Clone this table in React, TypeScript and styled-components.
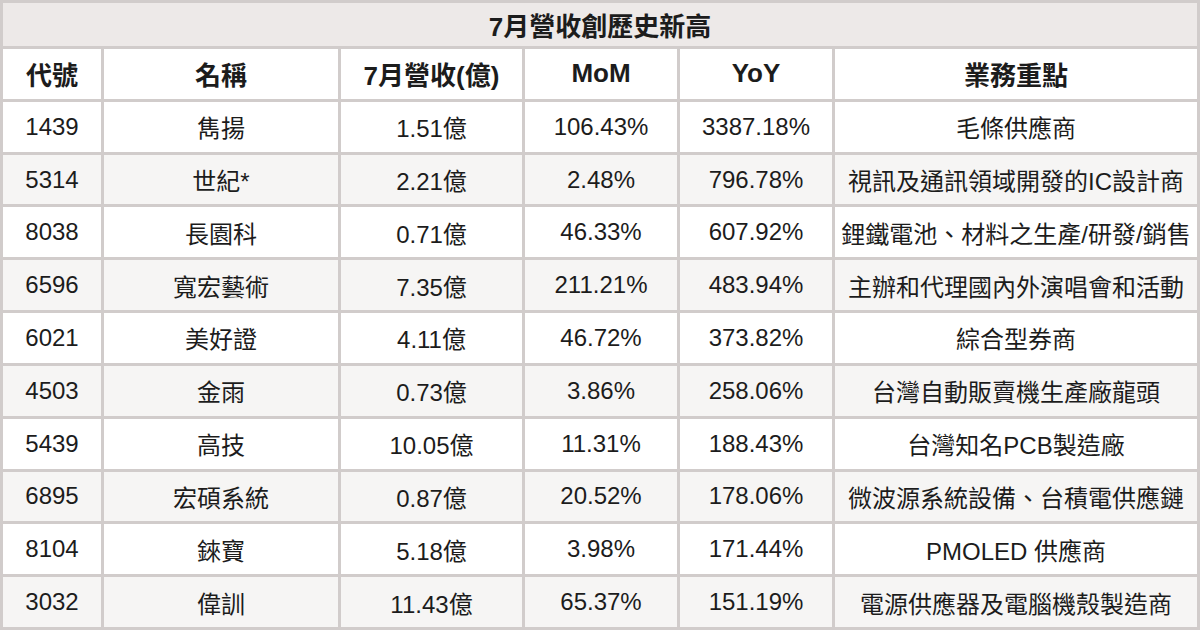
import styled, {createGlobalStyle} from "styled-components";

const GlobalStyle = createGlobalStyle`
    html, body {
        margin: 0;
        padding: 0;
        background: #ffffff;
    }
    body {
        font-family: "Liberation Sans", "Noto Sans CJK TC", sans-serif;
        color: #1c1c1c;
    }
`;

const Sheet = styled.div`
    box-sizing: border-box;
    width: 1200px;
    height: 630px;
    display: grid;
    grid-template-columns: 98px 234px 181px 152px 152px 1fr;
    grid-template-rows: 43px repeat(11, 1fr);
    gap: 3px;
    padding: 3px;
    background: #d1cccb;
`;

const Title = styled.div`
    grid-column: 1 / -1;
    display: flex;
    align-items: center;
    justify-content: center;
    background: #ede9e8;
    font-size: 26px;
    font-weight: 700;
`;

const Cell = styled.div<{$alt?: boolean; $head?: boolean}>`
    display: flex;
    align-items: center;
    justify-content: center;
    background: ${p => (p.$alt ? "#f6f5f4" : "#ffffff")};
    font-size: ${p => (p.$head ? "26px" : "24px")};
    font-weight: ${p => (p.$head ? 700 : 400)};
    white-space: nowrap;
    overflow: hidden;
`;

const headers = ["代號", "名稱", "7月營收(億)", "MoM", "YoY", "業務重點"];

const rows = [
    ["1439", "雋揚", "1.51億", "106.43%", "3387.18%", "毛條供應商"],
    ["5314", "世紀*", "2.21億", "2.48%", "796.78%", "視訊及通訊領域開發的IC設計商"],
    ["8038", "長園科", "0.71億", "46.33%", "607.92%", "鋰鐵電池、材料之生產/研發/銷售"],
    ["6596", "寬宏藝術", "7.35億", "211.21%", "483.94%", "主辦和代理國內外演唱會和活動"],
    ["6021", "美好證", "4.11億", "46.72%", "373.82%", "綜合型券商"],
    ["4503", "金雨", "0.73億", "3.86%", "258.06%", "台灣自動販賣機生產廠龍頭"],
    ["5439", "高技", "10.05億", "11.31%", "188.43%", "台灣知名PCB製造廠"],
    ["6895", "宏碩系統", "0.87億", "20.52%", "178.06%", "微波源系統設備、台積電供應鏈"],
    ["8104", "錸寶", "5.18億", "3.98%", "171.44%", "PMOLED 供應商"],
    ["3032", "偉訓", "11.43億", "65.37%", "151.19%", "電源供應器及電腦機殼製造商"],
];

export default function App() {
    return (
        <>
            <GlobalStyle />
            <Sheet>
                <Title>7月營收創歷史新高</Title>
                {headers.map((h) => (
                    <Cell $head key={h}>{h}</Cell>
                ))}
                {rows.map((row, i) =>
                    row.map((v, j) => (
                        <Cell $alt={i % 2 === 1} key={`${i}-${j}`}>{v}</Cell>
                    ))
                )}
            </Sheet>
        </>
    );
}
